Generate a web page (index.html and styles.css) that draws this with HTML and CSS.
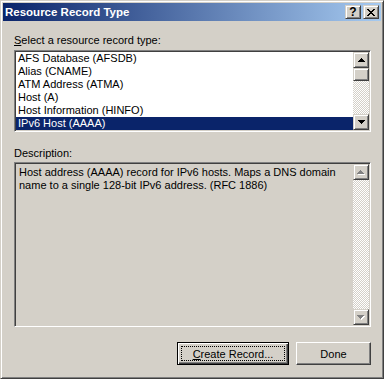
FILE: index.html
```html
<!DOCTYPE html>
<html>
<head>
<meta charset="utf-8">
<link rel="stylesheet" href="styles.css">
</head>
<body>
<div class="window">
  <div class="titlebar">
    <span class="title">Resource Record Type</span>
    <div class="tbtns">
      <span class="tbtn help">?</span>
      <span class="tbtn close"><svg width="8" height="7" viewBox="0 0 8 7"><path d="M0 0h2v1H0zM6 0h2v1H6zM1 1h2v1H1zM5 1h2v1H5zM2 2h4v1H2zM3 3h2v1H3zM2 4h4v1H2zM1 5h2v1H1zM5 5h2v1H5zM0 6h2v1H0zM6 6h2v1H6z" fill="#000"/></svg></span>
    </div>
  </div>
  <div class="content">
    <div class="lbl"><u>S</u>elect a resource record type:</div>
    <div class="field listbox">
      <ul class="items">
        <li>AFS Database (AFSDB)</li>
        <li>Alias (CNAME)</li>
        <li>ATM Address (ATMA)</li>
        <li>Host (A)</li>
        <li>Host Information (HINFO)</li>
        <li class="sel">IPv6 Host (AAAA)</li>
      </ul>
      <div class="vscroll">
        <span class="sbtn"><svg width="7" height="4" viewBox="0 0 7 4"><path d="M3 0h1v1H3zM2 1h3v1H2zM1 2h5v1H1zM0 3h7v1H0z" fill="#000"/></svg></span>
        <div class="track"><span class="thumb"></span></div>
        <span class="sbtn"><svg width="7" height="4" viewBox="0 0 7 4"><path d="M0 0h7v1H0zM1 1h5v1H1zM2 2h3v1H2zM3 3h1v1H3z" fill="#000"/></svg></span>
      </div>
    </div>
    <div class="lbl desc-lbl">Description:</div>
    <div class="field descbox">
      <p class="desc">Host address (AAAA) record for IPv6 hosts. Maps a DNS domain name to a single 128-bit IPv6 address. (RFC 1886)</p>
      <div class="vscroll">
        <span class="sbtn"><svg width="8" height="5" viewBox="0 0 8 5"><path d="M4 1h1v1H4zM3 2h3v1H3zM2 3h5v1H2zM1 4h7v1H1z" fill="#fff"/><path d="M3 0h1v1H3zM2 1h3v1H2zM1 2h5v1H1zM0 3h7v1H0z" fill="#808080"/></svg></span>
        <div class="track"></div>
        <span class="sbtn"><svg width="8" height="5" viewBox="0 0 8 5"><path d="M1 1h7v1H1zM2 2h5v1H2zM3 3h3v1H3zM4 4h1v1H4z" fill="#fff"/><path d="M0 0h7v1H0zM1 1h5v1H1zM2 2h3v1H2zM3 3h1v1H3z" fill="#808080"/></svg></span>
      </div>
    </div>
    <div class="buttons">
      <span class="btn default"><span class="focus"><u>C</u>reate Record...</span></span>
      <span class="btn">Done</span>
    </div>
  </div>
</div>
</body>
</html>
```
FILE: styles.css
```css
html, body {
  margin: 0;
  padding: 0;
}
body {
  width: 384px;
  height: 379px;
  overflow: hidden;
  background: #d4d0c8;
  font-family: "Liberation Sans", Arial, sans-serif;
  font-size: 11px;
  color: #000;
}
.window {
  box-sizing: border-box;
  width: 384px;
  height: 379px;
  background: #d4d0c8;
  border: 1px solid;
  border-color: #d4d0c8 #404040 #404040 #d4d0c8;
  box-shadow: inset 1px 1px #fff, inset -1px -1px #808080;
  padding: 2px;
  display: flex;
  flex-direction: column;
}
.titlebar {
  height: 18px;
  flex: none;
  display: flex;
  align-items: center;
  justify-content: space-between;
  padding: 0 2px;
  background: linear-gradient(to right, #0a246a, #a6caf0);
}
.title {
  color: #fff;
  font-weight: bold;
  font-size: 11.5px;
  line-height: 18px;
  white-space: nowrap;
}
.tbtns {
  display: flex;
  gap: 2px;
}
.tbtn {
  box-sizing: border-box;
  width: 16px;
  height: 14px;
  display: flex;
  align-items: center;
  justify-content: center;
  background: #d4d0c8;
  border: 1px solid;
  border-color: #d4d0c8 #404040 #404040 #d4d0c8;
  box-shadow: inset 1px 1px #fff, inset -1px -1px #808080;
}
.help {
  font-weight: bold;
  font-size: 12px;
  line-height: 12px;
}
.content {
  flex: 1;
  display: flex;
  flex-direction: column;
  padding: 13px 10px 0 11px;
}
.lbl {
  height: 13px;
  line-height: 13px;
  white-space: nowrap;
  margin-bottom: 3px;
}
.desc-lbl {
  margin-top: 15px;
  margin-bottom: 2px;
}
.field {
  box-sizing: border-box;
  border: 1px solid;
  border-color: #808080 #fff #fff #808080;
  box-shadow: inset 1px 1px #404040, inset -1px -1px #d4d0c8;
  padding: 1px;
  display: flex;
}
.listbox {
  height: 82px;
  background: #fff;
}
.items {
  flex: 1;
  margin: 0;
  padding: 0;
  list-style: none;
}
.items li {
  height: 13px;
  line-height: 13px;
  padding-left: 2px;
  white-space: nowrap;
}
.items li.sel {
  background: #0a246a;
  color: #fff;
}
.vscroll {
  width: 16px;
  flex: none;
  display: flex;
  flex-direction: column;
}
.sbtn {
  box-sizing: border-box;
  width: 16px;
  height: 16px;
  flex: none;
  display: flex;
  align-items: center;
  justify-content: center;
  background: #d4d0c8;
  border: 1px solid;
  border-color: #d4d0c8 #404040 #404040 #d4d0c8;
  box-shadow: inset 1px 1px #fff, inset -1px -1px #808080;
}
.track {
  flex: 1;
  background: repeating-conic-gradient(#fff 0 25%, #d4d0c8 0 50%) 0 0 / 2px 2px;
}
.thumb {
  display: block;
  box-sizing: border-box;
  width: 16px;
  height: 13px;
  background: #d4d0c8;
  border: 1px solid;
  border-color: #d4d0c8 #404040 #404040 #d4d0c8;
  box-shadow: inset 1px 1px #fff, inset -1px -1px #808080;
}
.descbox {
  height: 165px;
  background: #d4d0c8;
}
.desc {
  flex: 1;
  margin: 0;
  padding: 2px 6px 0 3px;
  line-height: 13px;
}
.buttons {
  margin-top: 15px;
  display: flex;
  justify-content: flex-end;
  gap: 7px;
}
.btn {
  box-sizing: border-box;
  width: 75px;
  height: 23px;
  display: flex;
  align-items: center;
  justify-content: center;
  background: #d4d0c8;
  border: 1px solid;
  border-color: #fff #404040 #404040 #fff;
  box-shadow: inset -1px -1px #808080;
  white-space: nowrap;
}
.btn.default {
  width: 112px;
  border: 1px solid #000;
  box-shadow: inset 1px 1px #fff, inset -1px -1px #404040, inset -2px -2px #808080;
  padding: 3px;
}
.focus {
  box-sizing: border-box;
  flex: 1;
  align-self: stretch;
  display: flex;
  align-items: center;
  justify-content: center;
  border: 1px dotted #000;
}
```
